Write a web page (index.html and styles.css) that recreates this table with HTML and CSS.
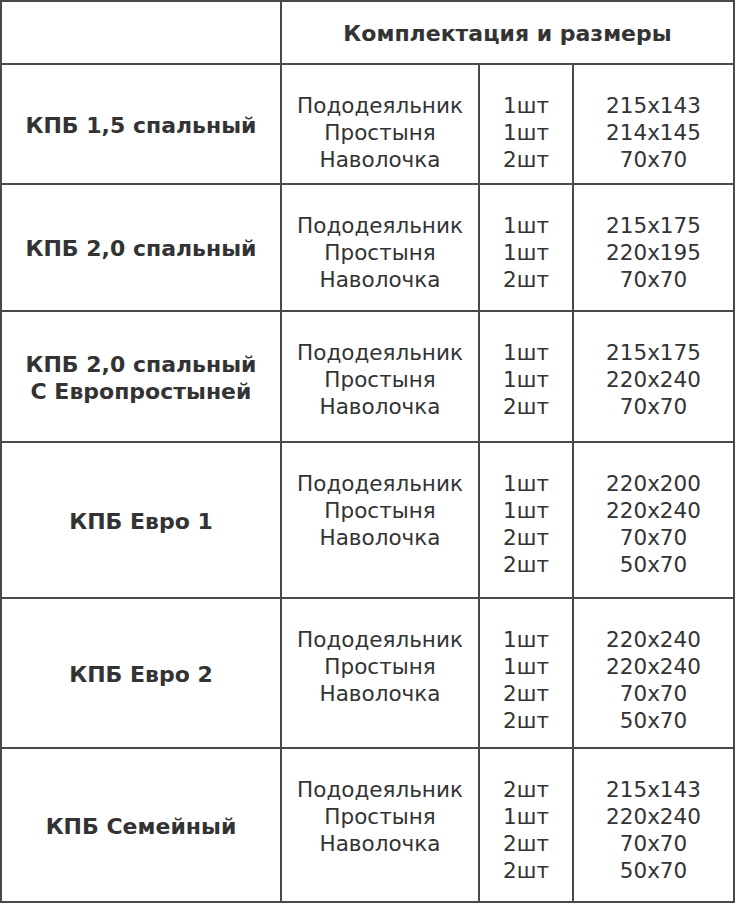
FILE: index.html
```html
<!DOCTYPE html>
<html lang="ru">
<head>
<meta charset="utf-8">
<title>Комплектация и размеры</title>
<link rel="stylesheet" href="styles.css">
</head>
<body>
<table class="sizes">
  <colgroup>
    <col class="c-name">
    <col class="c-item">
    <col class="c-qty">
    <col class="c-dim">
  </colgroup>
  <thead>
    <tr class="r-head">
      <th></th>
      <th colspan="3">Комплектация и размеры</th>
    </tr>
  </thead>
  <tbody>
    <tr class="r1">
      <th>КПБ 1,5 спальный</th>
      <td>Пододеяльник<br>Простыня<br>Наволочка</td>
      <td>1шт<br>1шт<br>2шт</td>
      <td>215x143<br>214x145<br>70x70</td>
    </tr>
    <tr class="r2">
      <th>КПБ 2,0 спальный</th>
      <td>Пододеяльник<br>Простыня<br>Наволочка</td>
      <td>1шт<br>1шт<br>2шт</td>
      <td>215x175<br>220x195<br>70x70</td>
    </tr>
    <tr class="r3">
      <th>КПБ 2,0 спальный<br>С Европростыней</th>
      <td>Пододеяльник<br>Простыня<br>Наволочка</td>
      <td>1шт<br>1шт<br>2шт</td>
      <td>215x175<br>220x240<br>70x70</td>
    </tr>
    <tr class="r4">
      <th>КПБ Евро 1</th>
      <td>Пододеяльник<br>Простыня<br>Наволочка</td>
      <td>1шт<br>1шт<br>2шт<br>2шт</td>
      <td>220x200<br>220x240<br>70x70<br>50x70</td>
    </tr>
    <tr class="r5">
      <th>КПБ Евро 2</th>
      <td>Пододеяльник<br>Простыня<br>Наволочка</td>
      <td>1шт<br>1шт<br>2шт<br>2шт</td>
      <td>220x240<br>220x240<br>70x70<br>50x70</td>
    </tr>
    <tr class="r6">
      <th>КПБ Семейный</th>
      <td>Пододеяльник<br>Простыня<br>Наволочка</td>
      <td>2шт<br>1шт<br>2шт<br>2шт</td>
      <td>215x143<br>220x240<br>70x70<br>50x70</td>
    </tr>
  </tbody>
</table>
</body>
</html>
```

FILE: styles.css
```css
html, body {
  margin: 0;
  padding: 0;
  background: #ffffff;
}

.sizes {
  border-collapse: collapse;
  table-layout: fixed;
  width: 735px;
  font-family: "DejaVu Sans", Verdana, sans-serif;
  font-size: 21.5px;
  line-height: 27px;
  color: #333333;
}

.c-name { width: 280px; }
.c-item { width: 198px; }
.c-qty  { width: 94px; }
.c-dim  { width: 161px; }

.sizes th,
.sizes td {
  border: 2px solid #4a4a4a;
  padding: 0;
  text-align: center;
}

.sizes td {
  vertical-align: top;
  padding-top: 27px;
  font-weight: normal;
}

.sizes th {
  vertical-align: middle;
  font-weight: bold;
  font-size: 22px;
  padding-top: 2px;
}

.r-head th { height: 59px; }
.r1 th { height: 116px; }
.r2 th { height: 123px; }
.r3 th { height: 127px; }
.r4 th { height: 152px; }
.r5 th { height: 146px; }
.r6 th { height: 150px; }
```
